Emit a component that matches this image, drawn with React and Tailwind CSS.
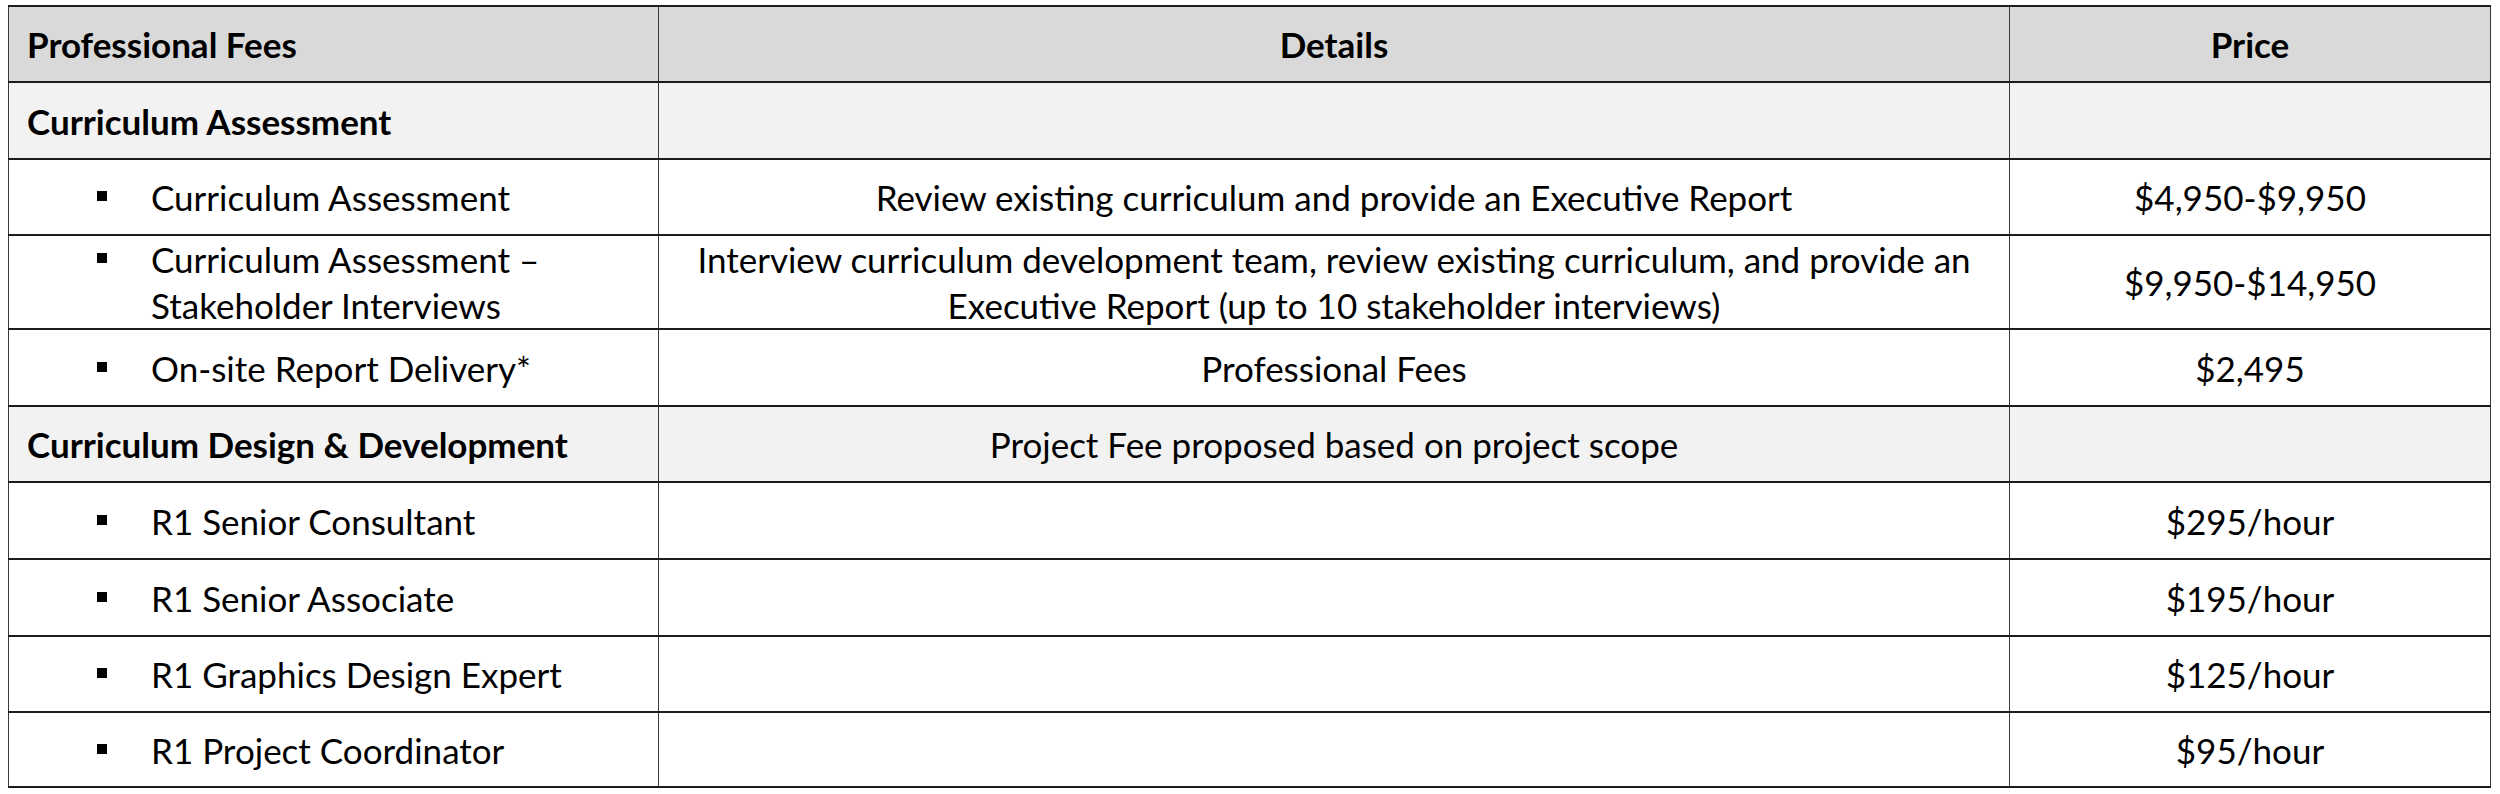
const items = [
  { type: "head", h: "h-[76px]" },
  { type: "section", h: "h-[77px]", label: "Curriculum Assessment", details: "", price: "" },
  {
    type: "item",
    h: "h-[76px]",
    label: ["Curriculum Assessment"],
    details: ["Review existing curriculum and provide an Executive Report"],
    price: "$4,950-$9,950",
  },
  {
    type: "item",
    h: "h-[94px]",
    label: ["Curriculum Assessment –", "Stakeholder Interviews"],
    details: [
      "Interview curriculum development team, review existing curriculum, and provide an",
      "Executive Report (up to 10 stakeholder interviews)",
    ],
    price: "$9,950-$14,950",
  },
  {
    type: "item",
    h: "h-[77px]",
    label: ["On-site Report Delivery*"],
    details: ["Professional Fees"],
    price: "$2,495",
  },
  {
    type: "section",
    h: "h-[76px]",
    label: "Curriculum Design & Development",
    details: "Project Fee proposed based on project scope",
    price: "",
  },
  { type: "item", h: "h-[77px]", label: ["R1 Senior Consultant"], details: [], price: "$295/hour" },
  { type: "item", h: "h-[77px]", label: ["R1 Senior Associate"], details: [], price: "$195/hour" },
  { type: "item", h: "h-[76px]", label: ["R1 Graphics Design Expert"], details: [], price: "$125/hour" },
  { type: "item", h: "h-[75px]", label: ["R1 Project Coordinator"], details: [], price: "$95/hour" },
];

const cell = "border-x border-y-2 border-x-[#3a3a3a] border-y-[#1c1c1c] align-middle whitespace-nowrap";

const App = () => {
  return (
    <div className="min-h-screen bg-white pt-[5px] pl-[8px] font-['Lato',sans-serif] text-black">
      <table className="w-[2482px] table-fixed border-collapse text-[35px] leading-[46px]">
        <colgroup>
          <col className="w-[650px]" />
          <col className="w-[1351px]" />
          <col className="w-[481px]" />
        </colgroup>
        <tbody>
          {items.map((row, i) => {
            if (row.type === "head") {
              return (
                <tr key={i} className={`${row.h} bg-[#d9d9d9] font-bold`}>
                  <td className={`${cell} pl-[18px]`}>Professional Fees</td>
                  <td className={`${cell} text-center`}>Details</td>
                  <td className={`${cell} text-center`}>Price</td>
                </tr>
              );
            }
            if (row.type === "section") {
              return (
                <tr key={i} className={`${row.h} bg-[#f2f2f2]`}>
                  <td className={`${cell} pl-[18px] font-bold`}>{row.label}</td>
                  <td className={`${cell} text-center`}>{row.details}</td>
                  <td className={`${cell} text-center`}>{row.price}</td>
                </tr>
              );
            }
            return (
              <tr key={i} className={row.h}>
                <td className={`${cell} pl-[88px]`}>
                  <div className="flex items-start">
                    <span className="mt-[17px] h-[10px] w-[10px] shrink-0 bg-black" />
                    <div className="pl-[44px]">
                      {row.label.map((l) => (
                        <div key={l}>{l}</div>
                      ))}
                    </div>
                  </div>
                </td>
                <td className={`${cell} text-center`}>
                  {row.details.map((d) => (
                    <div key={d}>{d}</div>
                  ))}
                </td>
                <td className={`${cell} text-center`}>{row.price}</td>
              </tr>
            );
          })}
        </tbody>
      </table>
    </div>
  );
};

export default App;
